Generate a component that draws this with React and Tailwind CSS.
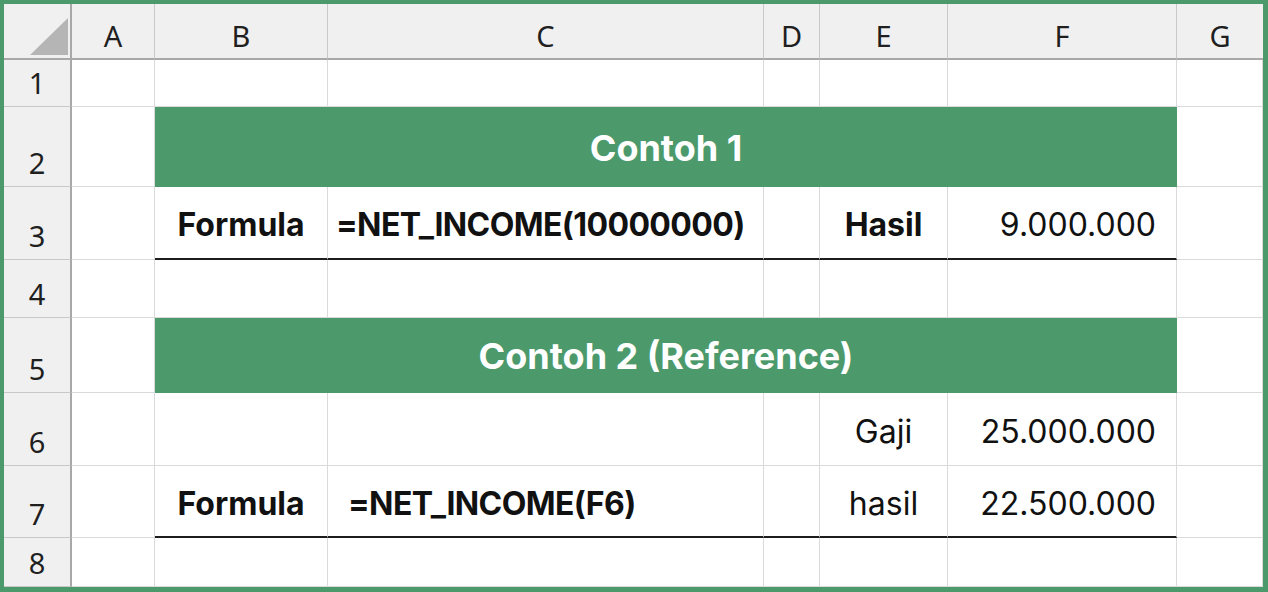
import React from "react";

const cellFont = { fontFamily: "Inter, 'Noto Sans', sans-serif" };
const hdrFont = { fontFamily: "'Noto Sans', 'Open Sans', sans-serif" };

function ColHead({ children, last }) {
  return (
    <div
      className={`flex items-center justify-center bg-[#f0f0f0] border-b-2 border-b-[#a8a8a8] ${last ? "" : "border-r border-r-[#c8c8c8]"} pt-[9px] text-[29px] text-[#1f1f1f]`}
      style={hdrFont}
    >
      {children}
    </div>
  );
}

function RowHead({ children }) {
  return (
    <div
      className="flex items-end justify-center bg-[#f0f0f0] border-r-2 border-r-[#a8a8a8] border-b border-b-[#c8c8c8] pb-[7px] text-[29px] leading-none text-[#1f1f1f]"
      style={hdrFont}
    >
      <span className="pb-[2px]">{children}</span>
    </div>
  );
}

function Cell({ children, className = "", line = false }) {
  return (
    <div
      className={`flex items-center pt-[5px] border-r border-r-[#dadada] ${line ? "border-b-2 border-b-[#1c1c1c]" : "border-b border-b-[#dadada]"} text-[32px] text-[#111] ${className}`}
      style={cellFont}
    >
      {children}
    </div>
  );
}

function Banner({ children }) {
  return (
    <div
      className="col-span-5 flex items-center justify-center pt-[2px] bg-[#4c9a6c] border-b border-b-[#4c9a6c] text-[36px] font-bold text-white"
      style={cellFont}
    >
      {children}
    </div>
  );
}

export default function App() {
  return (
    <div className="w-[1268px] h-[592px] bg-[#4c9a6c] pt-[4px] pl-[4px] pr-[5px] pb-[5px] overflow-hidden">
      <div className="grid h-full w-full bg-white grid-cols-[68px_83px_173px_436px_56px_128px_229px_86px] grid-rows-[56px_47px_80px_73px_58px_75px_73px_72px_49px] overflow-hidden">
        {/* header row */}
        <div className="relative bg-[#f0f0f0] border-b-2 border-b-[#a8a8a8] border-r-2 border-r-[#a8a8a8]">
          <svg className="absolute left-[26px] top-[14px]" width="38" height="37" viewBox="0 0 38 37">
            <polygon points="38,0 38,37 0,37" fill="#b5b5b5" />
          </svg>
        </div>
        <ColHead>A</ColHead>
        <ColHead>B</ColHead>
        <ColHead>C</ColHead>
        <ColHead>D</ColHead>
        <ColHead>E</ColHead>
        <ColHead>F</ColHead>
        <ColHead last>G</ColHead>

        {/* row 1 */}
        <RowHead>1</RowHead>
        <Cell />
        <Cell />
        <Cell />
        <Cell />
        <Cell />
        <Cell />
        <Cell />

        {/* row 2 */}
        <RowHead>2</RowHead>
        <Cell />
        <Banner>Contoh 1</Banner>
        <Cell />

        {/* row 3 */}
        <RowHead>3</RowHead>
        <Cell />
        <Cell line className="justify-center font-bold">Formula</Cell>
        <Cell line className="pl-[8px] font-bold tracking-[-0.6px]">=NET_INCOME(10000000)</Cell>
        <Cell line />
        <Cell line className="justify-center font-bold">Hasil</Cell>
        <Cell line className="justify-end pr-[20px]">9.000.000</Cell>
        <Cell />

        {/* row 4 */}
        <RowHead>4</RowHead>
        <Cell />
        <Cell />
        <Cell />
        <Cell />
        <Cell />
        <Cell />
        <Cell />

        {/* row 5 */}
        <RowHead>5</RowHead>
        <Cell />
        <Banner>Contoh 2 (Reference)</Banner>
        <Cell />

        {/* row 6 */}
        <RowHead>6</RowHead>
        <Cell />
        <Cell />
        <Cell />
        <Cell />
        <Cell className="justify-center">Gaji</Cell>
        <Cell className="justify-end pr-[20px]">25.000.000</Cell>
        <Cell />

        {/* row 7 */}
        <RowHead>7</RowHead>
        <Cell />
        <Cell line className="justify-center font-bold">Formula</Cell>
        <Cell line className="pl-[20px] font-bold tracking-[-0.6px]">=NET_INCOME(F6)</Cell>
        <Cell line />
        <Cell line className="justify-center">hasil</Cell>
        <Cell line className="justify-end pr-[20px]">22.500.000</Cell>
        <Cell />

        {/* row 8 */}
        <RowHead>8</RowHead>
        <Cell />
        <Cell />
        <Cell />
        <Cell />
        <Cell />
        <Cell />
        <Cell />
      </div>
    </div>
  );
}
